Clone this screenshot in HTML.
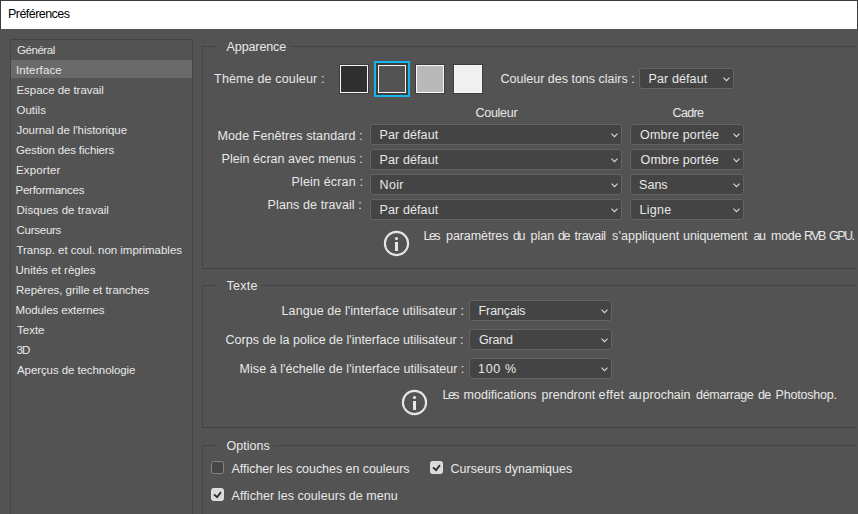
<!DOCTYPE html>
<html><head><meta charset="utf-8"><style>
*{margin:0;padding:0;box-sizing:border-box}
html,body{width:858px;height:514px;overflow:hidden;background:#535353}
body{position:relative;font-family:"Liberation Sans",sans-serif;font-size:12.5px;color:#e8e8e8}
.sh{position:absolute}
.t{position:absolute;white-space:nowrap;line-height:15px}
#titlebar{left:0;top:0;width:858px;height:29px;background:#fff;border:1px solid #3c3c3c;border-bottom:none}
#side{left:10px;top:39px;width:183px;height:500px;border:1px solid #434343}
#sel{left:11px;top:60px;width:181px;height:18px;background:#6a6a6a}
.grp{left:202px;width:655px;border:1px solid #444444;border-right:none}
.sw{top:65px;width:28px;height:28px;border:1px solid #f8f8f8;box-shadow:0 0 0 1px #3c3c3c}
.dd{border:1px solid #646464;border-radius:3px;background:#444444}
.chev{}
.cb{width:13px;height:13px;border-radius:2.5px}
.cb.u{border:1px solid #858585;background:#464646}
.cb.c{background:#dadada;border:1px solid #e2e2e2}
body.m{background:#000}
body.m .sh{visibility:hidden}
body.m .t{color:#fff !important}
</style></head><body>
<div class="sh" id="titlebar"></div>
<div class="sh" id="side"></div><div class="sh" id="sel"></div>
<div class="sh grp" style="top:46px;height:223px"></div>
<div class="sh grp" style="top:285px;height:143px"></div>
<div class="sh grp" style="top:445px;height:200px"></div>
<div class="sh" style="left:217px;top:40px;width:73px;height:12px;background:#535353"></div>
<div class="sh" style="left:217px;top:279px;width:46px;height:12px;background:#535353"></div>
<div class="sh" style="left:217px;top:439px;width:57px;height:12px;background:#535353"></div>
<div class="sh" style="left:374px;top:61px;width:36px;height:36px;border:2px solid #14b6ee;background:#443d3d"></div>
<div class="sh sw" style="left:340px;background:#303030"></div>
<div class="sh sw" style="left:378px;background:#535353"></div>
<div class="sh sw" style="left:416px;background:#b9b9b9"></div>
<div class="sh sw" style="left:454px;background:#f0f0f0"></div>
<div class="sh dd" style="left:639px;top:68px;width:95px;height:21px"></div><svg class="sh chev" style="left:723px;top:77px" width="9" height="6"><path d="M0.5 0.7L3.5 3.7L6.5 0.7" stroke="#dcdcdc" stroke-width="1.05" fill="none"/></svg>
<div class="sh dd" style="left:370px;top:124px;width:252px;height:21px"></div><svg class="sh chev" style="left:611px;top:133px" width="9" height="6"><path d="M0.5 0.7L3.5 3.7L6.5 0.7" stroke="#dcdcdc" stroke-width="1.05" fill="none"/></svg>
<div class="sh dd" style="left:630px;top:124px;width:114px;height:21px"></div><svg class="sh chev" style="left:733px;top:133px" width="9" height="6"><path d="M0.5 0.7L3.5 3.7L6.5 0.7" stroke="#dcdcdc" stroke-width="1.05" fill="none"/></svg>
<div class="sh dd" style="left:370px;top:149px;width:252px;height:21px"></div><svg class="sh chev" style="left:611px;top:158px" width="9" height="6"><path d="M0.5 0.7L3.5 3.7L6.5 0.7" stroke="#dcdcdc" stroke-width="1.05" fill="none"/></svg>
<div class="sh dd" style="left:630px;top:149px;width:114px;height:21px"></div><svg class="sh chev" style="left:733px;top:158px" width="9" height="6"><path d="M0.5 0.7L3.5 3.7L6.5 0.7" stroke="#dcdcdc" stroke-width="1.05" fill="none"/></svg>
<div class="sh dd" style="left:370px;top:174px;width:252px;height:21px"></div><svg class="sh chev" style="left:611px;top:183px" width="9" height="6"><path d="M0.5 0.7L3.5 3.7L6.5 0.7" stroke="#dcdcdc" stroke-width="1.05" fill="none"/></svg>
<div class="sh dd" style="left:630px;top:174px;width:114px;height:21px"></div><svg class="sh chev" style="left:733px;top:183px" width="9" height="6"><path d="M0.5 0.7L3.5 3.7L6.5 0.7" stroke="#dcdcdc" stroke-width="1.05" fill="none"/></svg>
<div class="sh dd" style="left:370px;top:199px;width:252px;height:21px"></div><svg class="sh chev" style="left:611px;top:208px" width="9" height="6"><path d="M0.5 0.7L3.5 3.7L6.5 0.7" stroke="#dcdcdc" stroke-width="1.05" fill="none"/></svg>
<div class="sh dd" style="left:630px;top:199px;width:114px;height:21px"></div><svg class="sh chev" style="left:733px;top:208px" width="9" height="6"><path d="M0.5 0.7L3.5 3.7L6.5 0.7" stroke="#dcdcdc" stroke-width="1.05" fill="none"/></svg>
<div class="sh dd" style="left:469px;top:300px;width:143px;height:21px"></div><svg class="sh chev" style="left:601px;top:309px" width="9" height="6"><path d="M0.5 0.7L3.5 3.7L6.5 0.7" stroke="#dcdcdc" stroke-width="1.05" fill="none"/></svg>
<div class="sh dd" style="left:469px;top:329px;width:143px;height:21px"></div><svg class="sh chev" style="left:601px;top:338px" width="9" height="6"><path d="M0.5 0.7L3.5 3.7L6.5 0.7" stroke="#dcdcdc" stroke-width="1.05" fill="none"/></svg>
<div class="sh dd" style="left:469px;top:358px;width:143px;height:21px"></div><svg class="sh chev" style="left:601px;top:367px" width="9" height="6"><path d="M0.5 0.7L3.5 3.7L6.5 0.7" stroke="#dcdcdc" stroke-width="1.05" fill="none"/></svg>
<svg class="sh" style="left:383px;top:230px" width="28" height="28"><circle cx="13.5" cy="13.5" r="11.6" stroke="#e6e6e6" stroke-width="2.1" fill="none"/><circle cx="13.5" cy="8.5" r="1.6" fill="#e6e6e6"/><rect x="12" y="12" width="3" height="9" fill="#e6e6e6"/></svg>
<svg class="sh" style="left:401px;top:389px" width="28" height="28"><circle cx="13.5" cy="13.5" r="11.6" stroke="#e6e6e6" stroke-width="2.1" fill="none"/><circle cx="13.5" cy="8.5" r="1.6" fill="#e6e6e6"/><rect x="12" y="12" width="3" height="9" fill="#e6e6e6"/></svg>
<div class="sh cb u" style="left:211px;top:461px"></div>
<div class="sh cb c" style="left:430px;top:461px"><svg width="13" height="13" style="position:absolute;left:-1px;top:-1px"><path d="M3 6.3L6.1 9.2L9.9 4.1" stroke="#2a2a2a" stroke-width="1.8" fill="none"/></svg></div>
<div class="sh cb c" style="left:211px;top:488px"><svg width="13" height="13" style="position:absolute;left:-1px;top:-1px"><path d="M3 6.3L6.1 9.2L9.9 4.1" stroke="#2a2a2a" stroke-width="1.8" fill="none"/></svg></div>
<div id="tb_cover" class="sh"></div>
<div class="t" id="t_title" style="left:8.0px;top:7px;letter-spacing:-0.540px;color:#000000">Préférences</div>
<div class="t" id="s0" style="left:17.0px;top:43px;letter-spacing:-0.450px;font-size:11.5px">Général</div>
<div class="t" id="s1" style="left:16.0px;top:63px;letter-spacing:0.113px;font-size:11.5px">Interface</div>
<div class="t" id="s2" style="left:16.5px;top:83px;letter-spacing:-0.056px;font-size:11.5px">Espace de travail</div>
<div class="t" id="s3" style="left:16.5px;top:103px;letter-spacing:0.000px;font-size:11.5px">Outils</div>
<div class="t" id="s4" style="left:16.5px;top:123px;letter-spacing:-0.041px;font-size:11.5px">Journal de l'historique</div>
<div class="t" id="s5" style="left:16.0px;top:143px;letter-spacing:-0.142px;font-size:11.5px">Gestion des fichiers</div>
<div class="t" id="s6" style="left:16.0px;top:163px;letter-spacing:0.128px;font-size:11.5px">Exporter</div>
<div class="t" id="s7" style="left:15.5px;top:183px;letter-spacing:-0.246px;font-size:11.5px">Performances</div>
<div class="t" id="s8" style="left:16.5px;top:203px;letter-spacing:0.053px;font-size:11.5px">Disques de travail</div>
<div class="t" id="s9" style="left:16.5px;top:223px;letter-spacing:-0.257px;font-size:11.5px">Curseurs</div>
<div class="t" id="s10" style="left:16.5px;top:243px;letter-spacing:-0.029px;font-size:11.5px">Transp. et coul. non imprimables</div>
<div class="t" id="s11" style="left:15.5px;top:263px;letter-spacing:0.000px;font-size:11.5px">Unités et règles</div>
<div class="t" id="s12" style="left:16.0px;top:283px;letter-spacing:-0.036px;font-size:11.5px">Repères, grille et tranches</div>
<div class="t" id="s13" style="left:15.5px;top:303px;letter-spacing:-0.120px;font-size:11.5px">Modules externes</div>
<div class="t" id="s14" style="left:17.0px;top:323px;letter-spacing:0.000px;font-size:11.5px">Texte</div>
<div class="t" id="s15" style="left:16.5px;top:343px;letter-spacing:-0.800px;font-size:11.5px">3D</div>
<div class="t" id="s16" style="left:17.0px;top:363px;letter-spacing:-0.086px;font-size:11.5px">Aperçus de technologie</div>
<div class="t" id="g1" style="left:226.6px;top:40px;letter-spacing:-0.113px">Apparence</div>
<div class="t" id="l_theme" style="left:214.1px;top:72px;letter-spacing:0.159px">Thème de couleur :</div>
<div class="t" id="l_tons" style="left:500.6px;top:72px;letter-spacing:-0.002px">Couleur des tons clairs :</div>
<div class="t" id="d_tons" style="left:648.6px;top:72px;letter-spacing:0.100px">Par défaut</div>
<div class="t" id="h_coul" style="left:475.6px;top:106px;letter-spacing:-0.300px">Couleur</div>
<div class="t" id="h_cadre" style="left:672.6px;top:106px;letter-spacing:-0.675px">Cadre</div>
<div class="t" id="l_r1" style="left:217.6px;top:129px;letter-spacing:0.078px">Mode Fenêtres standard :</div>
<div class="t" id="l_r2" style="left:221.6px;top:152px;letter-spacing:0.039px">Plein écran avec menus :</div>
<div class="t" id="l_r3" style="left:291.6px;top:175px;letter-spacing:0.150px">Plein écran :</div>
<div class="t" id="l_r4" style="left:267.6px;top:198px;letter-spacing:0.106px">Plans de travail :</div>
<div class="t" id="d_r1" style="left:379.6px;top:128px;letter-spacing:0.100px">Par défaut</div>
<div class="t" id="d_r2" style="left:379.6px;top:153px;letter-spacing:0.100px">Par défaut</div>
<div class="t" id="d_r3" style="left:379.6px;top:178px;letter-spacing:0.300px">Noir</div>
<div class="t" id="d_r4" style="left:379.6px;top:203px;letter-spacing:0.100px">Par défaut</div>
<div class="t" id="c_r1" style="left:640.1px;top:128px;letter-spacing:0.164px">Ombre portée</div>
<div class="t" id="c_r2" style="left:640.6px;top:153px;letter-spacing:0.082px">Ombre portée</div>
<div class="t" id="c_r3" style="left:639.1px;top:178px;letter-spacing:0.000px">Sans</div>
<div class="t" id="c_r4" style="left:639.6px;top:203px;letter-spacing:0.225px">Ligne</div>
<div class="t" id="g2" style="left:226.6px;top:279px;letter-spacing:0.225px">Texte</div>
<div class="t" id="l_lang" style="left:281.6px;top:304px;letter-spacing:0.079px">Langue de l'interface utilisateur :</div>
<div class="t" id="l_corps" style="left:225.6px;top:333px;letter-spacing:0.000px">Corps de la police de l'interface utilisateur :</div>
<div class="t" id="l_mise" style="left:239.6px;top:362px;letter-spacing:0.041px">Mise à l'échelle de l'interface utilisateur :</div>
<div class="t" id="d_lang" style="left:478.6px;top:304px;letter-spacing:-0.129px">Français</div>
<div class="t" id="d_corps" style="left:479.1px;top:333px;letter-spacing:-0.225px">Grand</div>
<div class="t" id="d_mise" style="left:478.1px;top:362px;letter-spacing:0.675px">100 %</div>
<div class="t" id="g3" style="left:226.6px;top:439px;letter-spacing:0.000px">Options</div>
<div class="t" id="cb1" style="left:231.6px;top:462px;letter-spacing:-0.058px">Afficher les couches en couleurs</div>
<div class="t" id="cb2" style="left:450.6px;top:462px;letter-spacing:0.000px">Curseurs dynamiques</div>
<div class="t" id="cb3" style="left:231.6px;top:489px;letter-spacing:0.064px">Afficher les couleurs de menu</div>
<div class="t" id="i1w0" style="left:423.6px;top:229px;letter-spacing:-1.600px">Les</div>
<div class="t" id="i1w1" style="left:446.1px;top:229px;letter-spacing:-0.100px">paramètres</div>
<div class="t" id="i1w2" style="left:513.1px;top:229px;letter-spacing:-1.600px">du</div>
<div class="t" id="i1w3" style="left:530.6px;top:229px;letter-spacing:0.000px">plan</div>
<div class="t" id="i1w4" style="left:558.1px;top:229px;letter-spacing:-1.600px">de</div>
<div class="t" id="i1w5" style="left:574.6px;top:229px;letter-spacing:-0.300px">travail</div>
<div class="t" id="i1w6" style="left:612.1px;top:229px;letter-spacing:0.081px">s'appliquent</div>
<div class="t" id="i1w7" style="left:683.1px;top:229px;letter-spacing:-0.100px">uniquement</div>
<div class="t" id="i1w8" style="left:753.6px;top:229px;letter-spacing:-1.600px">au</div>
<div class="t" id="i1w9" style="left:771.1px;top:229px;letter-spacing:-0.300px">mode</div>
<div class="t" id="i1w10" style="left:804.1px;top:229px;letter-spacing:-1.600px">RVB</div>
<div class="t" id="i1w11" style="left:829.1px;top:229px;letter-spacing:-1.600px">GPU.</div>
<div class="t" id="i2w0" style="left:442.6px;top:388px;letter-spacing:-1.600px">Les</div>
<div class="t" id="i2w1" style="left:463.6px;top:388px;letter-spacing:0.000px">modifications</div>
<div class="t" id="i2w2" style="left:541.6px;top:388px;letter-spacing:0.004px">prendront</div>
<div class="t" id="i2w3" style="left:598.6px;top:388px;letter-spacing:0.350px">effet</div>
<div class="t" id="i2w4" style="left:628.6px;top:388px;letter-spacing:-0.800px">au</div>
<div class="t" id="i2w5" style="left:642.6px;top:388px;letter-spacing:0.001px">prochain</div>
<div class="t" id="i2w6" style="left:696.1px;top:388px;letter-spacing:-0.340px">démarrage</div>
<div class="t" id="i2w7" style="left:758.1px;top:388px;letter-spacing:-0.800px">de</div>
<div class="t" id="i2w8" style="left:775.6px;top:388px;letter-spacing:-0.200px">Photoshop.</div>
</body></html>
